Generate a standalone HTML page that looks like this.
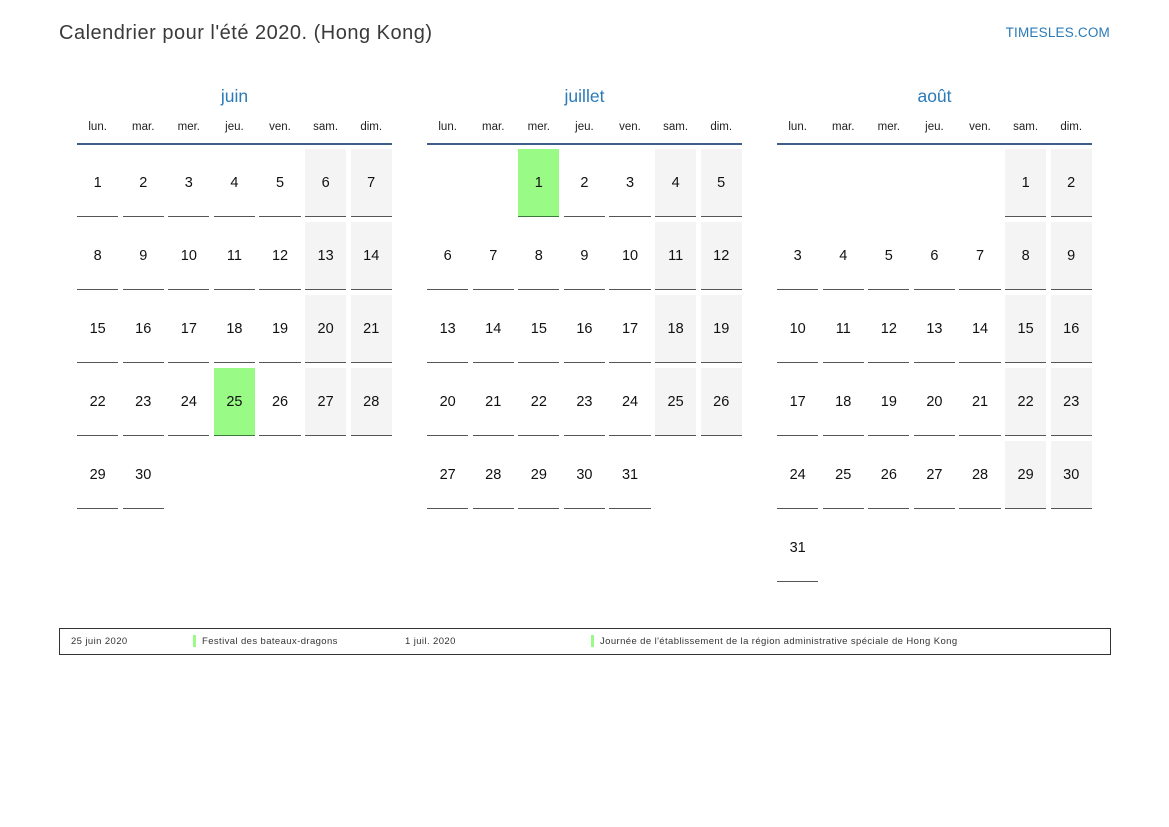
<!DOCTYPE html>
<html><head><meta charset="utf-8"><style>
*{margin:0;padding:0;box-sizing:border-box}
body{width:1169px;height:827px;background:#fff;font-family:"Liberation Sans",sans-serif;position:relative;overflow:hidden;color:#111}
.title{position:absolute;left:59px;top:22px;font-size:20px;color:#3a3a3a;letter-spacing:0.5px}
.brand{position:absolute;right:59px;top:25px;font-size:13.5px;color:#2a7ab8;letter-spacing:0.2px}
.month{position:absolute;top:86px;width:315px}
.mname{text-align:center;font-size:17.5px;color:#2a7ab8;height:22px}
.wd{display:grid;grid-template-columns:repeat(7,41.3px);column-gap:4.3px;margin-top:13px;font-size:11.5px;color:#222;text-align:center;height:24px;border-bottom:2px solid #3d5f8a;padding-bottom:0}
.grid{display:grid;grid-template-columns:repeat(7,41.3px);column-gap:4.3px;row-gap:5px;margin-top:4px;grid-auto-rows:68px}
.grid div{display:flex;align-items:center;justify-content:center;font-size:14.5px;border-bottom:1.3px solid #555}
.grid div.e{border:none}
.grid div.w{background:#f4f4f4}
.grid div.h{background:#9afa86;border-bottom-color:#3b7a3b}
.legend{position:absolute;left:59px;top:628px;width:1052px;height:27px;border:1.3px solid #333;font-size:9.5px;color:#333}
.legend span{position:absolute;top:7px;letter-spacing:0.4px}
.bar{position:absolute;top:6px;width:3px;height:12px;background:#9afa86}
</style></head><body>
<div class="title">Calendrier pour l'été 2020. (Hong Kong)</div>
<div class="brand">TIMESLES.COM</div>

<div class="month" style="left:77px">
<div class="mname">juin</div>
<div class="wd"><span>lun.</span><span>mar.</span><span>mer.</span><span>jeu.</span><span>ven.</span><span>sam.</span><span>dim.</span></div>
<div class="grid">
<div>1</div><div>2</div><div>3</div><div>4</div><div>5</div><div class="w">6</div><div class="w">7</div>
<div>8</div><div>9</div><div>10</div><div>11</div><div>12</div><div class="w">13</div><div class="w">14</div>
<div>15</div><div>16</div><div>17</div><div>18</div><div>19</div><div class="w">20</div><div class="w">21</div>
<div>22</div><div>23</div><div>24</div><div class="h">25</div><div>26</div><div class="w">27</div><div class="w">28</div>
<div>29</div><div>30</div>
</div></div>

<div class="month" style="left:427px">
<div class="mname">juillet</div>
<div class="wd"><span>lun.</span><span>mar.</span><span>mer.</span><span>jeu.</span><span>ven.</span><span>sam.</span><span>dim.</span></div>
<div class="grid">
<div class="e"></div><div class="e"></div><div class="h">1</div><div>2</div><div>3</div><div class="w">4</div><div class="w">5</div>
<div>6</div><div>7</div><div>8</div><div>9</div><div>10</div><div class="w">11</div><div class="w">12</div>
<div>13</div><div>14</div><div>15</div><div>16</div><div>17</div><div class="w">18</div><div class="w">19</div>
<div>20</div><div>21</div><div>22</div><div>23</div><div>24</div><div class="w">25</div><div class="w">26</div>
<div>27</div><div>28</div><div>29</div><div>30</div><div>31</div>
</div></div>

<div class="month" style="left:777px">
<div class="mname">août</div>
<div class="wd"><span>lun.</span><span>mar.</span><span>mer.</span><span>jeu.</span><span>ven.</span><span>sam.</span><span>dim.</span></div>
<div class="grid">
<div class="e"></div><div class="e"></div><div class="e"></div><div class="e"></div><div class="e"></div><div class="w">1</div><div class="w">2</div>
<div>3</div><div>4</div><div>5</div><div>6</div><div>7</div><div class="w">8</div><div class="w">9</div>
<div>10</div><div>11</div><div>12</div><div>13</div><div>14</div><div class="w">15</div><div class="w">16</div>
<div>17</div><div>18</div><div>19</div><div>20</div><div>21</div><div class="w">22</div><div class="w">23</div>
<div>24</div><div>25</div><div>26</div><div>27</div><div>28</div><div class="w">29</div><div class="w">30</div>
<div>31</div>
</div></div>

<div class="legend">
<span style="left:11px">25 juin 2020</span>
<div class="bar" style="left:133px"></div>
<span style="left:142px">Festival des bateaux-dragons</span>
<span style="left:345px">1 juil. 2020</span>
<div class="bar" style="left:531px"></div>
<span style="left:540px">Journée de l'établissement de la région administrative spéciale de Hong Kong</span>
</div>
</body></html>
